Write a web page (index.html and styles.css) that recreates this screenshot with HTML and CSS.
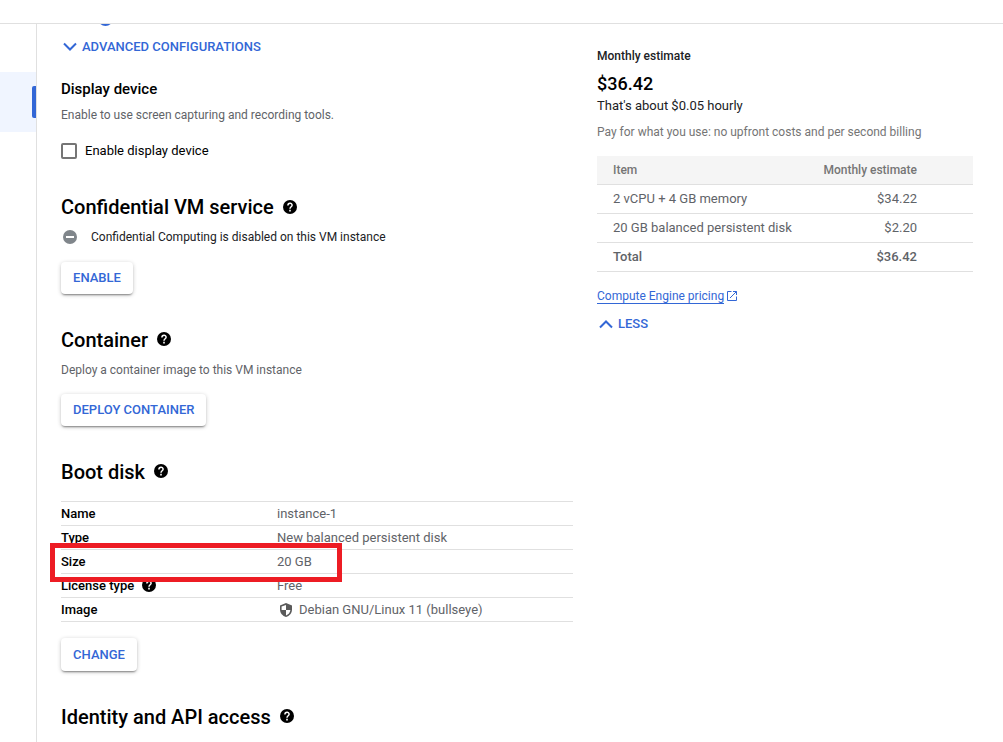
FILE: index.html
```html
<!DOCTYPE html>
<html lang="en">
<head>
<meta charset="utf-8">
<title>Create an instance</title>
<link rel="stylesheet" href="styles.css">
</head>
<body>
<svg class="defs" width="0" height="0">
  <symbol id="help" viewBox="0 0 14 14">
    <circle cx="7" cy="7" r="7" fill="#000"/>
    <path d="M4.900 5.500C4.900 2.400 9.200 2.600 9.100 5.200C9.100 6.700 7 6.800 7 8.700" fill="none" stroke="#fff" stroke-width="1.500"/>
    <path d="M6.200 9.800h1.600v1.600H6.200z" fill="#fff"/>
  </symbol>
</svg>
<header class="topbar"></header>
<div class="body">
  <nav class="sidebar"><div class="nav-item"><i class="marker"></i></div></nav>
  <main class="form">
    <i class="radio-edge"></i>
    <div class="advanced"><svg width="14" height="10" viewBox="0 0 14 10"><path d="M1 1.500L7 7.500L13 1.500" fill="none" stroke="#3367d6" stroke-width="2"/></svg><span>ADVANCED CONFIGURATIONS</span></div>
    <h3 class="subhead"><span>Display device</span></h3>
    <p class="desc"><span>Enable to use screen capturing and recording tools.</span></p>
    <label class="check"><i class="box"></i><span>Enable display device</span></label>

    <h2 class="heading"><span>Confidential VM service</span><svg class="help"><use href="#help"/></svg></h2>
    <p class="status"><svg width="14" height="14" viewBox="0 0 14 14"><circle cx="7" cy="7" r="7" fill="#80868b"/><path d="M3 7h8" stroke="#fff" stroke-width="2"/></svg><span>Confidential Computing is disabled on this VM instance</span></p>
    <button class="btn enable">ENABLE</button>

    <h2 class="heading raised"><span>Container</span><svg class="help"><use href="#help"/></svg></h2>
    <p class="desc"><span>Deploy a container image to this VM instance</span></p>
    <button class="btn deploy">DEPLOY CONTAINER</button>

    <h2 class="heading raised"><span>Boot disk</span><svg class="help"><use href="#help"/></svg></h2>
    <dl class="disk">
      <div class="row"><dt>Name</dt><dd>instance-1</dd></div>
      <div class="row"><dt>Type</dt><dd>New balanced persistent disk</dd></div>
      <div class="row"><dt>Size</dt><dd>20 GB</dd><i class="highlight"></i></div>
      <div class="row"><dt>License type<svg class="help"><use href="#help"/></svg></dt><dd>Free</dd></div>
      <div class="row"><dt>Image</dt><dd><svg class="shield" width="12" height="14" viewBox="0 0 12 14"><path d="M6 0L0 2.400V6.500C0 10 2.500 13 6 14C9.500 13 12 10 12 6.500V2.400Z" fill="#5a5a5a"/><path d="M6 1.900V7H1.600V3.600ZM6 7H10.400C10.100 9.700 8.400 11.600 6 12.400Z" fill="#fff"/></svg>Debian GNU/Linux 11 (bullseye)</dd></div>
    </dl>
    <button class="btn change">CHANGE</button>

    <h2 class="heading raised"><span>Identity and API access</span><svg class="help"><use href="#help"/></svg></h2>
  </main>
  <aside class="estimate">
    <h4 class="est-title"><span>Monthly estimate</span></h4>
    <p class="price"><span>$36.42</span></p>
    <p class="hourly"><span>That's about $0.05 hourly</span></p>
    <p class="note"><span>Pay for what you use: no upfront costs and per second billing</span></p>
    <div class="costs">
      <div class="cost head"><span>Item</span><span>Monthly estimate</span></div>
      <div class="cost"><span>2 vCPU + 4 GB memory</span><span>$34.22</span></div>
      <div class="cost"><span>20 GB balanced persistent disk</span><span>$2.20</span></div>
      <div class="cost total"><span>Total</span><span>$36.42</span></div>
    </div>
    <div class="pricing"><a>Compute Engine pricing</a><svg width="10" height="10" viewBox="0 0 10 10"><path d="M4.500 .500H.500V9.500H9.500V5.500M6 .500H9.500V4M9.500 .500L3 7" fill="none" stroke="#3367d6"/></svg></div>
    <div class="less"><svg width="14" height="10" viewBox="0 0 14 10"><path d="M1 8.500L7 2.500L13 8.500" fill="none" stroke="#3367d6" stroke-width="2"/></svg><span>LESS</span></div>
  </aside>
</div>
</body>
</html>
```
FILE: styles.css
```css
* { box-sizing: border-box; }
body { margin: 0; height: 742px; overflow: hidden; background: #fff; color: #000; font: 13px/20px Roboto, sans-serif; }
h2, h3, h4, p, dl, dd { margin: 0; }
i { display: block; }
.defs { position: absolute; }
.topbar { height: 24px; border-bottom: 1px solid #e0e0e0; }
.body { display: flex; height: 718px; overflow: hidden; }
.sidebar { width: 37px; border-right: 1px solid #e0e0e0; padding-top: 48px; }
.nav-item { display: flex; align-items: center; justify-content: flex-end; height: 60px; background: #f0f5ff; }
.marker { width: 4px; height: 32px; border-radius: 2px 0 0 2px; background: #3367d6; }
.form { position: relative; width: 536px; padding: 13px 0 0 24px; }
.radio-edge { position: absolute; left: 61px; top: -13px; width: 15px; height: 15px; border-radius: 50%; background: #3367d6; }
.advanced { display: flex; align-items: center; height: 20px; padding-left: 2px; gap: 5px; color: #3367d6; font-weight: 500; }
.subhead { margin-top: 22px; font-size: 15px; line-height: 20px; font-weight: 500; }
.desc { margin-top: 6px; height: 20px; font-size: 12px; color: #5f6368; }
.check { display: flex; align-items: center; height: 20px; margin-top: 16px; gap: 8px; }
.box { width: 16px; height: 16px; border: 2px solid #757575; border-radius: 2px; }
.heading { display: flex; align-items: center; gap: 9px; height: 28px; margin-top: 32px; font-size: 20px; line-height: 28px; font-weight: 500; }
.help { width: 14px; height: 14px; flex: none; }
.raised .help { margin-top: -2px; }
.status { display: flex; align-items: center; gap: 14px; height: 20px; margin-top: 6px; padding-left: 2px; font-size: 12px; color: #202124; }
.btn { display: block; height: 32px; padding: 0 12px; border: 0; border-radius: 4px; background: #fff; color: #3367d6; font: 500 13px/32px Roboto, sans-serif; white-space: nowrap; box-shadow: 0 2px 2px -1px rgba(0,0,0,.4), 0 1px 4px rgba(0,0,0,.22); }
.enable { width: 72px; margin-top: 15px; }
.deploy { width: 145px; margin-top: 14px; }
.change { width: 76px; height: 33px; margin-top: 16px; }
.disk { margin-top: 15px; border-bottom: 1px solid #e0e0e0; }
.row { position: relative; display: grid; grid-template-columns: 216px 1fr; height: 24px; border-top: 1px solid #e0e0e0; line-height: 23px; }
.row dt { display: flex; align-items: center; gap: 8px; font-weight: 500; }
.row dd { display: flex; align-items: center; color: #5f6368; }
.row .help { margin-top: -2px; }
.shield { margin: 0 7px 0 3px; }
.highlight { position: absolute; z-index: 1; left: -11px; top: -7px; width: 292px; height: 39px; border: 5px solid #ed1c24; }
.estimate { width: 400px; padding: 22px 0 0 24px; margin-right: 30px; }
.est-title { height: 20px; font-size: 12px; font-weight: 500; color: #202124; }
.price { height: 20px; margin-top: 8px; font-size: 18px; font-weight: 500; }
.hourly { height: 20px; margin-top: 2px; color: #202124; }
.note { height: 20px; margin-top: 6px; font-size: 12px; color: #757575; }
.costs { margin-top: 14px; }
.cost { display: flex; justify-content: space-between; height: 29px; padding: 0 56px 0 16px; border-bottom: 1px solid #e0e0e0; line-height: 28px; color: #5f6368; }
.head { background: #f5f5f5; font-size: 12px; font-weight: 500; color: #757575; }
.total { font-weight: 500; }
.pricing { display: flex; align-items: center; gap: 3px; height: 20px; margin-top: 14px; color: #3367d6; font-size: 12px; }
.pricing a { line-height: 14px; border-bottom: 1px solid #3367d6; }
.less { display: flex; align-items: center; gap: 5px; height: 20px; margin-top: 8px; padding-left: 2px; color: #3367d6; font-weight: 500; }
```
